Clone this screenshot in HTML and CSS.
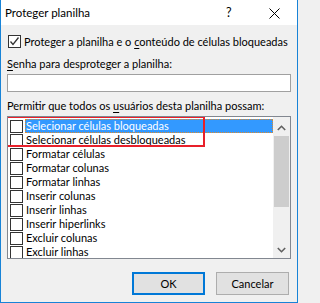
FILE: index.html
```html
<!DOCTYPE html>
<html lang="pt-BR">
<head>
<meta charset="utf-8">
<title>Proteger planilha</title>
<link rel="stylesheet" href="styles.css">
</head>
<body>
<div class="window">
  <div class="titlebar">
    <span class="title">Proteger planilha</span>
    <span class="help">?</span>
    <span class="close">
      <svg width="11" height="11" viewBox="0 0 11 11"><path d="M0.5 0.5 L10.5 10.5 M10.5 0.5 L0.5 10.5" stroke="#000" stroke-width="1" fill="none"/></svg>
    </span>
  </div>
  <div class="content">
    <div class="check-row">
      <span class="cb checked">
        <svg width="11" height="11" viewBox="0 0 11 11"><path d="M1.5 5.5 L4 8.5 L9.5 1.5" stroke="#333" stroke-width="1.3" fill="none"/></svg>
      </span>
      <span class="lbl">Proteger a planilha e o <u>c</u>onteúdo de células bloqueadas</span>
    </div>
    <div class="label pw-label"><u>S</u>enha para desproteger a planilha:</div>
    <div class="input"></div>
    <div class="label list-label">Permitir que todos os <u>u</u>suários desta planilha possam:</div>
    <div class="listbox">
      <div class="items">
        <div class="item"><span class="cb"></span><span class="text selected">Selecionar células bloqueadas</span></div>
        <div class="item"><span class="cb"></span><span class="text">Selecionar células desbloqueadas</span></div>
        <div class="item"><span class="cb"></span><span class="text">Formatar células</span></div>
        <div class="item"><span class="cb"></span><span class="text">Formatar colunas</span></div>
        <div class="item"><span class="cb"></span><span class="text">Formatar linhas</span></div>
        <div class="item"><span class="cb"></span><span class="text">Inserir colunas</span></div>
        <div class="item"><span class="cb"></span><span class="text">Inserir linhas</span></div>
        <div class="item"><span class="cb"></span><span class="text">Inserir hiperlinks</span></div>
        <div class="item"><span class="cb"></span><span class="text">Excluir colunas</span></div>
        <div class="item"><span class="cb"></span><span class="text">Excluir linhas</span></div>
      </div>
      <div class="scrollbar">
        <div class="arrow">
          <svg width="9" height="6" viewBox="0 0 9 6"><path d="M0.8 5 L4.5 1.3 L8.2 5" stroke="#606060" stroke-width="1.6" fill="none"/></svg>
        </div>
        <div class="track"><div class="thumb"></div></div>
        <div class="arrow">
          <svg width="9" height="6" viewBox="0 0 9 6"><path d="M0.8 1 L4.5 4.7 L8.2 1" stroke="#606060" stroke-width="1.6" fill="none"/></svg>
        </div>
      </div>
      <div class="highlight-box"></div>
    </div>
    <div class="buttons">
      <div class="btn default">OK</div>
      <div class="btn">Cancelar</div>
    </div>
  </div>
</div>
</body>
</html>
```
FILE: styles.css
```css
html, body {
  margin: 0;
  padding: 0;
  background: #f0f0f0;
}
body {
  font-family: Lato, "Liberation Sans", sans-serif;
  font-size: 11px;
  color: #000;
}
.window {
  width: 298px;
  height: 303px;
  box-sizing: border-box;
  border: 1px solid #1883d7;
  border-top: none;
  background: #f0f0f0;
  display: flex;
  flex-direction: column;
  overflow: hidden;
}
.titlebar {
  height: 25px;
  background: #fff;
  display: flex;
  align-items: center;
  flex-shrink: 0;
}
.title {
  padding-left: 4px;
  flex: 1;
  font-size: 11.5px;
  line-height: 16px;
}
.help {
  width: 8px;
  font-size: 12.5px;
  line-height: 16px;
  margin-right: 35px;
}
.close {
  display: flex;
  margin-right: 17px;
  margin-top: 1px;
}
.content {
  padding: 9px 8px 0 6px;
  display: flex;
  flex-direction: column;
}
.check-row {
  display: flex;
  align-items: center;
  height: 15px;
}
.cb {
  width: 13px;
  height: 13px;
  box-sizing: border-box;
  border: 1px solid #333;
  background: #fff;
  display: flex;
  align-items: center;
  justify-content: center;
  flex-shrink: 0;
}
.check-row .cb {
  margin-left: 1px;
}
.check-row .lbl {
  margin-left: 3px;
  line-height: 15px;
  white-space: nowrap;
}
.label {
  line-height: 16px;
  white-space: nowrap;
}
.label u, .lbl u {
  text-decoration-thickness: 1px;
  text-underline-offset: 2px;
}
.pw-label {
  margin-top: 7px;
}
.input {
  margin-top: 2px;
  height: 18px;
  width: 284px;
  box-sizing: border-box;
  border: 1px solid #a0a0a0;
  background: #fff;
}
.list-label {
  margin-top: 6px;
}
.listbox {
  position: relative;
  margin-top: 2px;
  width: 284px;
  height: 143px;
  box-sizing: border-box;
  border: 1px solid #828790;
  background: #fff;
  display: flex;
  overflow: hidden;
}
.items {
  flex: 1;
  padding-top: 2px;
  display: flex;
  flex-direction: column;
}
.item {
  height: 14px;
  display: flex;
  align-items: center;
  flex-shrink: 0;
}
.item .cb {
  margin-left: 2px;
  margin-right: 2px;
}
.item .text {
  flex: 1;
  height: 14px;
  line-height: 14px;
  padding-left: 1px;
  white-space: nowrap;
  box-sizing: border-box;
}
.item .text.selected {
  background: #3399ff;
  color: #fff;
  border: 1px dotted #e08a2a;
  line-height: 12px;
  padding-left: 0;
}
.scrollbar {
  width: 17px;
  padding-top: 2px;
  background: #f0f0f0;
  display: flex;
  flex-direction: column;
  flex-shrink: 0;
}
.arrow {
  height: 17px;
  display: flex;
  align-items: center;
  justify-content: center;
  flex-shrink: 0;
}
.track {
  flex: 1;
  display: flex;
  flex-direction: column;
}
.thumb {
  height: 71px;
  margin: 0 1px;
  background: #cdcdcd;
}
.highlight-box {
  position: absolute;
  left: -5px;
  top: -1px;
  width: 202px;
  height: 31px;
  border: 2px solid #e8202a;
  box-sizing: border-box;
  pointer-events: none;
}
.buttons {
  margin-top: 13px;
  display: flex;
  justify-content: flex-end;
  gap: 11px;
}
.btn {
  width: 73px;
  height: 23px;
  box-sizing: border-box;
  border: 1px solid #adadad;
  background: #e1e1e1;
  display: flex;
  align-items: center;
  justify-content: center;
  line-height: 16px;
}
.btn.default {
  border: 2px solid #0078d7;
}
```
